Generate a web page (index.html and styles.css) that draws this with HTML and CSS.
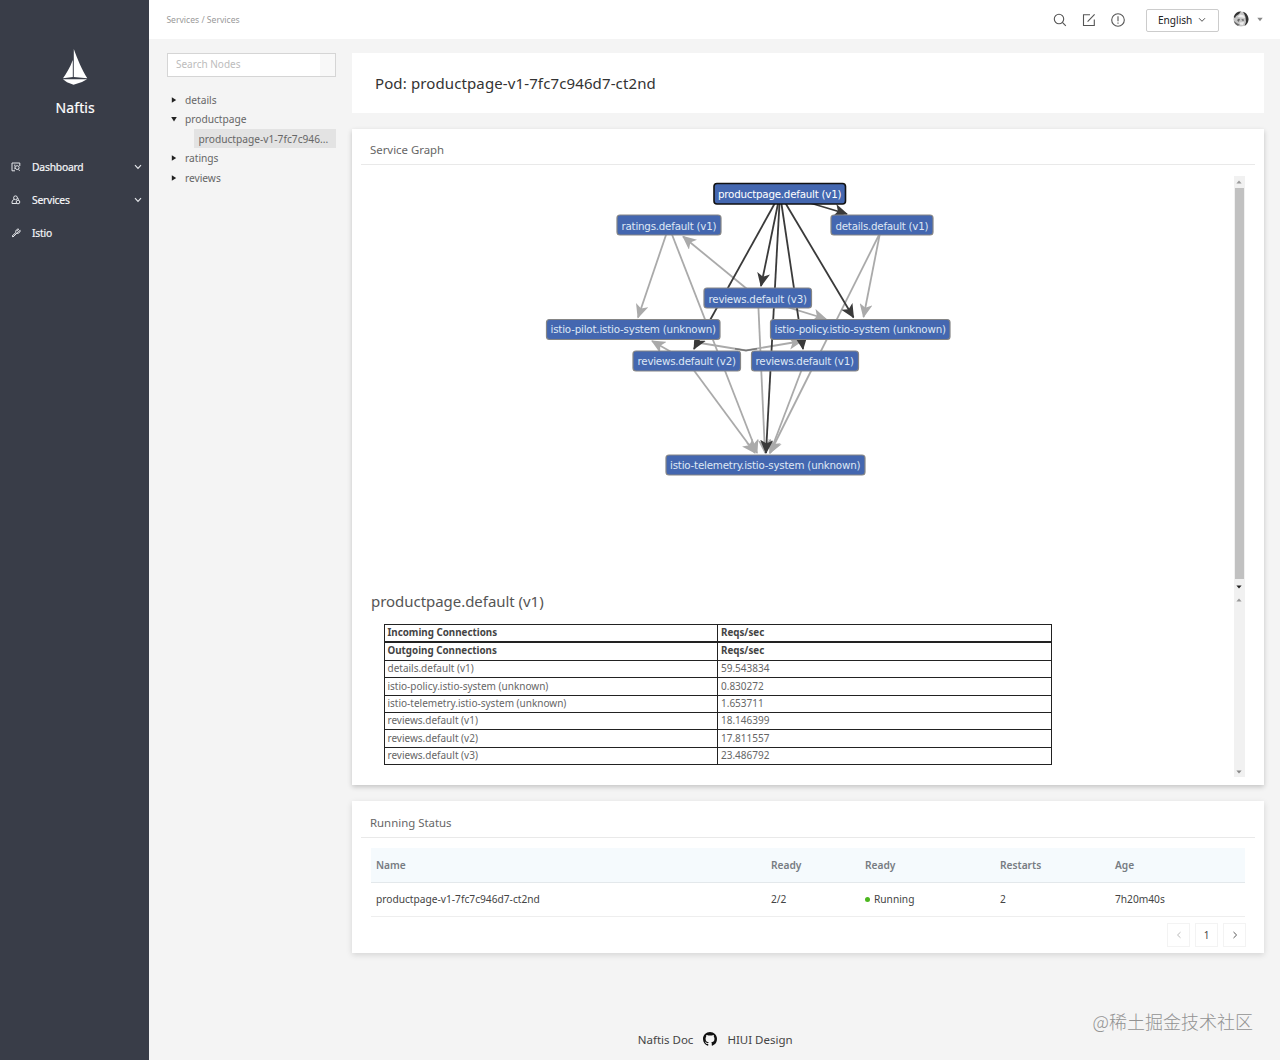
FILE: index.html
```html
<!DOCTYPE html>
<html lang="en">
<head>
<meta charset="utf-8">
<title>Naftis</title>
<link rel="stylesheet" href="styles.css">
</head>
<body>
<div class="app">
  <aside class="sidebar">
    <div class="brand">
      <svg class="brand-logo" width="26" height="38" viewBox="0 0 26 38"><path d="M10.800 12V29L1 30.300C4 26 7.800 20 10.800 12zM11.800 1C15 10 20 22 25.300 30.300L11.800 29z" fill="#fff"/><path d="M1 31.200H25L20 34 11.500 36.700 5 34.300z" fill="#fff"/></svg>
      <div class="brand-name">Naftis</div>
    </div>
    <nav class="menu">
      <a class="menu-item"><svg width="10" height="10" viewBox="0 0 10 10"><path d="M8.800 4V1H1V8.800H4M3 3.200H4.500M3 5H3.800M3 6.800H3.800M8.500 8.800L7.600 7.400"/><circle cx="6.200" cy="5.600" r="1.900"/></svg><span>Dashboard</span><svg class="arrow" width="8" height="6" viewBox="0 0 8 6"><path d="M1 1.200L4 4.300 7 1.200"/></svg></a>
      <a class="menu-item"><svg width="10" height="10" viewBox="0 0 10 10"><circle cx="4.500" cy="2.800" r="1.900"/><path d="M3.200 4.300C1.500 5 .8 6.300 1 8.500H5.800M6.300 3C7.500 3 7.800 4.500 7 5.300"/><circle cx="7" cy="7" r="1.800"/></svg><span>Services</span><svg class="arrow" width="8" height="6" viewBox="0 0 8 6"><path d="M1 1.200L4 4.300 7 1.200"/></svg></a>
      <a class="menu-item"><svg width="10" height="10" viewBox="0 0 10 10"><path d="M1 8.200L4.800 4.500C4.500 2.500 5.500 1 7.600 1L6.500 2.700 7.500 3.500 9.200 2.400C9.300 4.500 7.500 5.600 5.800 5.300L2 9zM3.300 7.500L7 3.800"/></svg><span>Istio</span></a>
    </nav>
  </aside>
  <div class="page">
    <header class="topbar">
      <div class="crumbs">Services / Services</div>
      <div class="tools">
        <svg class="tool" width="14" height="14" viewBox="0 0 14 14"><circle cx="6" cy="6" r="4.700"/><path d="M9.400 9.400L12.800 12.800"/></svg>
        <svg class="tool" width="14" height="14" viewBox="0 0 14 14"><path d="M8 1.700H1.500V12.500H12.300V6.500M5.600 8.600L12.600 1.300"/></svg>
        <svg class="tool" width="14" height="14" viewBox="0 0 14 14"><circle cx="7" cy="7" r="6.300"/><path d="M7 3.200V8.300M7 9.600V10.800"/></svg>
        <button class="lang"><span>English</span><svg width="8" height="6" viewBox="0 0 8 6"><path d="M1 1.200L4 4.300 7 1.200"/></svg></button>
        <svg class="avatar" width="16" height="16" viewBox="0 0 16 16"><circle cx="8" cy="8" r="7.600" fill="#c4c4c4"/><path d="M.7 6C2 2 5 .3 8 .5L6 3 3 5 2 7zM10 .8C13 1.500 15.600 5 15.500 8.500 15.300 11.500 13.500 14 11.500 15L13 11 12.500 6 11.500 3.500z" fill="#333"/><path d="M4.500 6L7 3.500 11 4.500 12 7 9 6.500z" fill="#eee"/><path d="M4 9L6 7.500 7 8.500 5.500 11zM8.500 8L11 8.500 10.500 10 9 9.500zM1 10L3.500 12 7 14 4.500 14.700C2.500 13.500 1.200 12 1 10z" fill="#666"/><path d="M6.500 11.500L11 11 10 14 7 13.500z" fill="#eee"/></svg>
        <svg class="caret" width="6" height="5" viewBox="0 0 6 5"><path d="M.3 .8H5.700L3 4.300z"/></svg>
      </div>
    </header>
    <div class="workspace">
      <section class="tree-panel">
        <div class="search"><span>Search Nodes</span><i class="search-end"></i></div>
        <ul class="tree">
          <li><svg width="6" height="6" viewBox="0 0 6 6"><path d="M.8 .2L5.200 3 .8 5.800z"/></svg>details</li>
          <li><svg width="6" height="6" viewBox="0 0 6 6"><path d="M.2 1H5.800L3 5.500z"/></svg>productpage</li>
          <li class="leaf">productpage-v1-7fc7c946...</li>
          <li><svg width="6" height="6" viewBox="0 0 6 6"><path d="M.8 .2L5.200 3 .8 5.800z"/></svg>ratings</li>
          <li><svg width="6" height="6" viewBox="0 0 6 6"><path d="M.8 .2L5.200 3 .8 5.800z"/></svg>reviews</li>
        </ul>
      </section>
      <main class="content">
        <section class="card pod"><span>Pod: productpage-v1-7fc7c946d7-ct2nd</span></section>
        <section class="card graph-card">
          <h2 class="card-title">Service Graph</h2>
          <div class="pane graph-pane">
            <svg class="graph" width="860" height="416" viewBox="371 176 860 416">
              <defs>
                <marker id="dark" markerUnits="userSpaceOnUse" markerWidth="15" markerHeight="13" refX="13" refY="6.500" orient="auto"><path d="M0 0L14 6.500 0 13 3.500 6.500z" fill="#3a3a3a"/></marker>
                <marker id="light" markerUnits="userSpaceOnUse" markerWidth="15" markerHeight="13" refX="13" refY="6.500" orient="auto"><path d="M0 0L14 6.500 0 13 3.500 6.500z" fill="#aaa"/></marker>
              </defs>
              <g class="edges light">
                <path d="M667 232L638 317.500"/><path d="M671 232L757 453"/><path d="M758 298L683 236.500"/>
                <path d="M880 233L863.500 317"/><path d="M880 233L770 453"/><path d="M758 298L826 319"/>
                <path d="M758 298L765 453"/><path d="M687 361L755 453"/><path d="M805 361L770 453"/>
                <path d="M687 361L652 341"/><path d="M694 342L746 350.500 802 341"/>
              </g>
              <path class="edge-join" d="M735 348.700L746 350.500 757 348.700"/>
              <g class="edges dark">
                <path d="M780 194L847 214"/><path d="M780 194L761 286"/><path d="M780 194L853.500 317.500"/>
                <path d="M780 194L694 349"/><path d="M780 194L803 349"/><path d="M780 194L766 453"/>
              </g>
              <g class="nodes">
                <rect class="active" x="714" y="183.500" width="131.500" height="20.500" rx="3"/>
                <rect x="617" y="215" width="104" height="20" rx="3"/>
                <rect x="831" y="215" width="102" height="20" rx="3"/>
                <rect x="704" y="288" width="107.500" height="20" rx="3"/>
                <rect x="546.500" y="319.500" width="173.500" height="20" rx="3"/>
                <rect x="770.500" y="319.500" width="179.500" height="20" rx="3"/>
                <rect x="633" y="351" width="107.500" height="20" rx="3"/>
                <rect x="751.500" y="351" width="107" height="20" rx="3"/>
                <rect x="666" y="455" width="199" height="20" rx="3"/>
              </g>
              <g class="labels">
                <text class="on" x="718" y="198.400" textLength="123.500">productpage.default (v1)</text>
                <text x="621.500" y="229.500" textLength="95">ratings.default (v1)</text>
                <text x="835.500" y="229.500" textLength="93">details.default (v1)</text>
                <text x="708.500" y="302.500" textLength="98.500">reviews.default (v3)</text>
                <text x="550.500" y="333.400" textLength="165.500">istio-pilot.istio-system (unknown)</text>
                <text x="774.500" y="333.400" textLength="171.500">istio-policy.istio-system (unknown)</text>
                <text x="637.500" y="365.400" textLength="98.500">reviews.default (v2)</text>
                <text x="755.500" y="365.400" textLength="98.500">reviews.default (v1)</text>
                <text x="670" y="469.400" textLength="190.500">istio-telemetry.istio-system (unknown)</text>
              </g>
            </svg>
            <div class="scroll"><svg width="6" height="4" viewBox="0 0 6 4"><path d="M.4 3.500H5.600L3 .5z" fill="#999"/></svg><i class="thumb"></i><svg width="6" height="4" viewBox="0 0 6 4"><path d="M.4 .5H5.600L3 3.500z" fill="#222"/></svg></div>
          </div>
          <div class="pane detail-pane">
            <div class="detail">
              <h3>productpage.default (v1)</h3>
              <table class="conn">
                <tr><th>Incoming Connections</th><th>Reqs/sec</th></tr>
              </table>
              <table class="conn out">
                <tr><th>Outgoing Connections</th><th>Reqs/sec</th></tr>
                <tr><td>details.default (v1)</td><td>59.543834</td></tr>
                <tr><td>istio-policy.istio-system (unknown)</td><td>0.830272</td></tr>
                <tr><td>istio-telemetry.istio-system (unknown)</td><td>1.653711</td></tr>
                <tr><td>reviews.default (v1)</td><td>18.146399</td></tr>
                <tr><td>reviews.default (v2)</td><td>17.811557</td></tr>
                <tr><td>reviews.default (v3)</td><td>23.486792</td></tr>
              </table>
            </div>
            <div class="scroll"><svg width="6" height="4" viewBox="0 0 6 4"><path d="M.4 3.500H5.600L3 .5z" fill="#999"/></svg><svg width="6" height="4" viewBox="0 0 6 4"><path d="M.4 .5H5.600L3 3.500z" fill="#888"/></svg></div>
          </div>
        </section>
        <section class="card status-card">
          <h2 class="card-title">Running Status</h2>
          <div class="status">
            <div class="row head"><span>Name</span><span>Ready</span><span>Ready</span><span>Restarts</span><span>Age</span></div>
            <div class="row"><span>productpage-v1-7fc7c946d7-ct2nd</span><span>2/2</span><span><i class="dot"></i>Running</span><span>2</span><span>7h20m40s</span></div>
          </div>
          <div class="pager">
            <span class="off"><svg width="6" height="8" viewBox="0 0 6 8"><path d="M4.500 1.200L1.500 4 4.500 6.800"/></svg></span>
            <span>1</span>
            <span><svg width="6" height="8" viewBox="0 0 6 8"><path d="M1.500 1L4.600 4 1.500 7"/></svg></span>
          </div>
        </section>
      </main>
    </div>
    <footer class="footer">
      <span class="doc">Naftis Doc</span>
      <svg width="14" height="14" viewBox="0 0 16 16"><path d="M8 0C3.580 0 0 3.580 0 8c0 3.540 2.290 6.530 5.470 7.590.4.070.55-.17.55-.38 0-.19-.01-.82-.01-1.490-2.010.37-2.530-.49-2.690-.94-.09-.23-.48-.94-.82-1.130-.28-.15-.68-.52-.01-.53.63-.01 1.080.58 1.230.82.72 1.210 1.870.87 2.330.66.07-.52.28-.87.51-1.070-1.780-.2-3.640-.89-3.640-3.950 0-.87.31-1.590.82-2.150-.08-.2-.36-1.020.08-2.120 0 0 .67-.21 2.200.82.64-.18 1.320-.27 2-.27s1.360.09 2 .27c1.530-1.040 2.200-.82 2.200-.82.44 1.100.16 1.920.08 2.120.51.56.82 1.270.82 2.150 0 3.070-1.870 3.750-3.650 3.950.29.25.54.73.54 1.480 0 1.070-.01 1.930-.01 2.200 0 .21.15.46.55.38A8.010 8.010 0 0 0 16 8c0-4.420-3.580-8-8-8z" fill="#111"/></svg>
      <span class="hiui">HIUI Design</span>
    </footer>
  </div>
  <div class="watermark">@稀土掘金技术社区</div>
</div>
</body>
</html>
```
FILE: styles.css
```css
* { box-sizing: border-box; }
body { margin: 0; font-family: "Noto Sans", "Open Sans", sans-serif; color: #555; background: #f4f4f4; }
svg { display: block; flex: none; }
h2, h3, ul { margin: 0; padding: 0; font-weight: 400; }
.app { display: flex; position: relative; width: 1280px; height: 1060px; overflow: hidden; }

.sidebar { width: 149.400px; flex: none; background: #393d48; color: #fff; }
.brand { display: flex; flex-direction: column; align-items: center; padding: 48px 0 0 1px; height: 150px; }
.brand-name { margin-top: 11px; font-size: 14px; line-height: 22px; letter-spacing: .15px; -webkit-text-stroke: .2px #fff; }
.menu-item { display: flex; align-items: center; height: 33.400px; padding: 0 7.500px 0 11px; font-size: 10.300px; letter-spacing: -.2px; color: #f5f6f8; -webkit-text-stroke: .2px #f5f6f8; }
.menu-item span { margin-left: 11px; flex: 1; }
.menu-item svg { fill: none; stroke: #e4e6ea; stroke-width: 1; }
.menu-item .arrow { stroke-width: 1.200; }

.page { flex: 1; display: flex; flex-direction: column; min-width: 0; }
.topbar { display: flex; justify-content: space-between; align-items: center; height: 39px; padding: 0 17px; background: #fff; }
.crumbs { font-size: 8.600px; color: #999; }
.tools { display: flex; align-items: center; }
.tool { margin-right: 15.300px; fill: none; stroke: #555; stroke-width: 1.100; }
.lang { display: flex; align-items: center; justify-content: space-between; width: 73px; height: 23px; margin: 1px 14px 0 5.500px; padding: 0 12px 0 11px; border: 1px solid #ccc; border-radius: 2px; background: #fff; font: 10.100px "Noto Sans", sans-serif; color: #222; }
.lang svg { fill: none; stroke: #555; }
.avatar { margin-top: -2px; }
.caret { margin-left: 8px; fill: #888; }

.workspace { display: flex; padding: 14px 16px 0 17.600px; height: 914px; }
.tree-panel { width: 169px; flex: none; }
.search { display: flex; justify-content: space-between; align-items: center; height: 24px; border: 1px solid #d5d5d5; background: #fff; padding-left: 8px; font-size: 10px; color: #bcbcbc; }
.search span { padding-bottom: 2px; }
.search-end { width: 15px; height: 22px; background: #f8f8f8; }
.tree { list-style: none; margin-top: 13px; font-size: 10.200px; color: #666; }
.tree li { display: flex; align-items: center; height: 19.600px; padding-left: 4px; }
.tree li svg { margin-right: 8px; fill: #222; }
.tree .leaf { margin-left: 27.500px; padding-left: 4px; height: 19px; background: #e3e3e3; white-space: nowrap; }

.content { display: flex; flex-direction: column; gap: 16px; flex: 1; margin-left: 16px; }
.card { background: #fff; box-shadow: 0 2px 5px rgba(0, 0, 0, .2); }
.pod { display: flex; align-items: center; height: 60px; padding-left: 23px; font-size: 15px; letter-spacing: .12px; color: #333; box-shadow: none; }
.graph-card { height: 656px; }
.status-card { height: 152px; box-shadow: 0 2px 6px rgba(0, 0, 0, .13); }
.card-title { margin: 0 9px; padding: 6px 9px 0; height: 36px; border-bottom: 1px solid #e9e9e9; font-size: 11.400px; line-height: 29px; color: #666; }
.status-card .card-title { padding-top: 7px; height: 37px; }
.pane { display: flex; justify-content: space-between; margin: 0 19.400px 0 19px; }
.graph-pane { margin-top: 11px; height: 416px; }
.scroll { display: flex; flex-direction: column; justify-content: space-between; align-items: center; width: 11px; padding: 4px 0 3px; background: #f1f1f1; }
.thumb { width: 9px; height: 391px; margin-bottom: 2px; background: #c1c1c1; }
.detail-pane { height: 185px; }
.detail-pane .scroll { padding-top: 6px; }
.detail h3 { height: 32px; font-size: 15px; line-height: 19px; letter-spacing: -.04px; color: #555; }
.conn { width: 668px; margin-left: 13px; border-collapse: collapse; table-layout: fixed; font-size: 10px; color: #666; }
.conn th, .conn td { height: 17.400px; padding: 0 2.500px 1.500px; border: 1px solid #222; line-height: 14px; text-align: left; }
.conn th { padding-bottom: .5px; color: #444; font-size: 9.800px; }

.edges path { fill: none; stroke-width: 1.800; }
.edges.light path { stroke: #aaa; marker-end: url(#light); }
.edges.dark path { stroke: #3a3a3a; marker-end: url(#dark); }
.edge-join { fill: none; stroke: #777; stroke-width: 1.500; }
.nodes rect { fill: #4467b0; stroke: #858585; stroke-width: 1.200; }
.nodes .active { stroke: #111; stroke-width: 1.600; }
.labels { font: 10.300px "DejaVu Sans", sans-serif; fill: #dfe7f5; }
.labels .on { fill: #fff; }

.status { margin: 10px 19px 0; font-size: 10.200px; color: #444; }
.row { display: grid; grid-template-columns: 395px 94px 135px 115px 1fr; align-items: center; height: 34px; padding: 0 0 1px 5px; border-bottom: 1px solid #eee; }
.head { height: 35px; padding-bottom: 0; background: #f5fafd; font-weight: 600; color: #777c82; border-color: #e3e8eb; }
.dot { display: inline-block; width: 5px; height: 5px; margin: 0 4px 1px 0; border-radius: 50%; background: #4cb71f; }
.pager { display: flex; justify-content: flex-end; gap: 5px; margin: 6px 18px 0; }
.pager span { display: flex; align-items: center; justify-content: center; width: 23px; height: 24px; border: 1px solid #f3f3f3; font-size: 10px; color: #444; }
.pager svg { fill: none; stroke: #555; }
.pager .off svg { stroke: #bbb; }

.footer { display: flex; align-items: center; justify-content: center; gap: 10px; margin: 74px 0 0 1px; height: 24px; font-size: 11.500px; color: #444; }
.watermark { position: absolute; right: 27px; top: 1008px; font: 18px/26px "Noto Sans CJK SC", sans-serif; font-weight: 300; color: #929292; }
```
